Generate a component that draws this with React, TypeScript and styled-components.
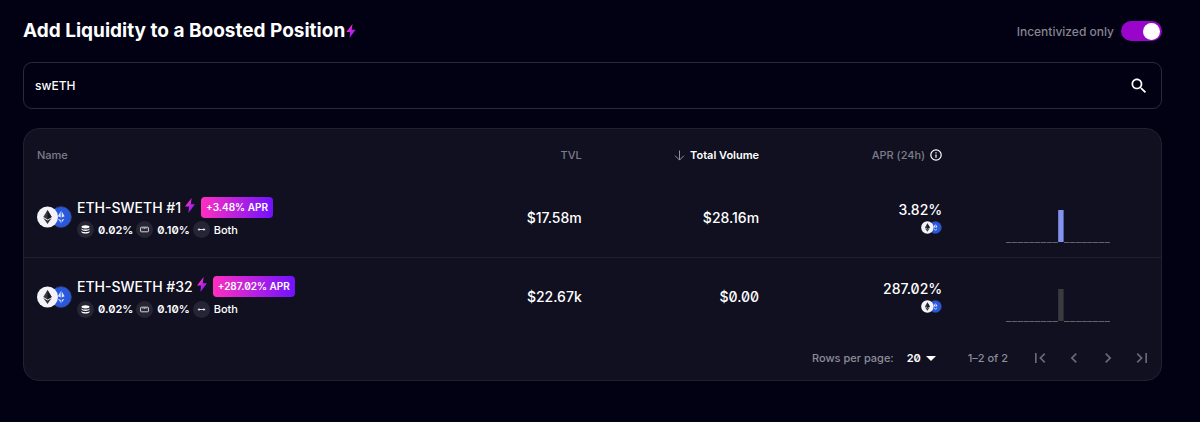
import React from 'react';
import styled, { createGlobalStyle } from 'styled-components';

const GlobalStyle = createGlobalStyle`
  *, *::before, *::after { box-sizing: border-box; }
  body {
    margin: 0;
    background: #010113;
    color: #fff;
    font-family: Inter, "Liberation Sans", sans-serif;
    font-size: 12px;
    font-weight: 500;
    font-feature-settings: "zero" 1;
  }
  button, input, select { font: inherit; color: inherit; }
`;

const Page = styled.main`
  padding: 20px 38px 40px 23px;
`;

const Header = styled.header`
  display: flex;
  align-items: center;
  justify-content: space-between;
  height: 22px;
  margin-bottom: 20px;
`;

const Title = styled.h1`
  display: flex;
  align-items: center;
  gap: 1px;
  margin: 0;
  font-size: 19px;
  font-weight: 700;
  line-height: 24px;
`;

const SwitchLabel = styled.label`
  display: flex;
  align-items: center;
  gap: 7px;
  color: #85858f;
  font-size: 12px;
`;

const Switch = styled.input`
  appearance: none;
  display: flex;
  align-items: center;
  width: 41px;
  height: 20px;
  margin: 0;
  padding: 0 2px;
  border-radius: 10px;
  background: #56566a;
  cursor: pointer;

  &::before {
    content: "";
    width: 17px;
    height: 17px;
    border-radius: 50%;
    background: #fff;
  }

  &:checked {
    justify-content: flex-end;
    background: #9a05cb;
  }
`;

const SearchBox = styled.form`
  display: flex;
  align-items: center;
  height: 47px;
  margin-bottom: 19px;
  padding: 0 12px 0 11px;
  border: 1px solid #2a2a3b;
  border-radius: 9px;
`;

const SearchInput = styled.input`
  flex: 1;
  min-width: 0;
  padding: 0;
  border: 0;
  outline: 0;
  background: transparent;
  font-size: 12px;
`;

const IconButton = styled.button`
  display: grid;
  place-items: center;
  padding: 0;
  border: 0;
  background: transparent;
  cursor: pointer;

  &:disabled { color: #6a6a75; cursor: default; }
`;

const Card = styled.section`
  border: 1px solid #212131;
  border-radius: 16px;
  background: #101021;
`;

const Table = styled.table`
  width: 100%;
  border-collapse: collapse;
  table-layout: fixed;
`;

const HeadCell = styled.th<{ $width: string; $left?: boolean; $active?: boolean }>`
  width: ${p => p.$width};
  height: 49px;
  padding: 3px 13px 0;
  text-align: ${p => (p.$left ? 'left' : 'right')};
  color: ${p => (p.$active ? '#fff' : '#7d7d88')};
  font-size: 11px;
  font-weight: ${p => (p.$active ? 600 : 500)};
`;

const HeadContent = styled.span`
  display: flex;
  align-items: center;
  justify-content: flex-end;
  gap: 5px;
`;

const Row = styled.tr`
  & + & { border-top: 1px solid #1f1f30; }
`;

const Cell = styled.td`
  height: 79px;
  padding: 0 13px;
  text-align: right;
  font-size: 14px;
`;

const ChartCell = styled(Cell)`
  padding-top: 18px;

  svg { display: block; margin: 0 auto; }
`;

const Pool = styled.div`
  display: flex;
  align-items: center;
  gap: 5px;
`;

const PoolText = styled.div`
  display: flex;
  flex-direction: column;
`;

const PoolTitle = styled.div`
  display: flex;
  align-items: center;
  gap: 4px;
  height: 22px;
  white-space: nowrap;

  svg { margin-bottom: 4px; }
`;

const AprBadge = styled.span`
  margin-left: 2px;
  padding: 0 5px;
  border-radius: 4px;
  background: linear-gradient(90deg, #ff2fc0, #7012ff);
  font-size: 10px;
  font-weight: 600;
  line-height: 21px;
`;

const Facts = styled.ul`
  display: flex;
  gap: 3px;
  margin: 3px 0 0;
  padding: 0;
  list-style: none;
`;

const Fact = styled.li<{ $strong?: boolean }>`
  display: flex;
  align-items: center;
  gap: 4px;
  font-size: 11px;
  font-weight: ${p => (p.$strong ? 600 : 500)};
`;

const FactIcon = styled.span`
  display: grid;
  place-items: center;
  width: 17px;
  height: 17px;
  border-radius: 50%;
  background: #252534;
`;

const AprValue = styled.div`
  display: flex;
  flex-direction: column;
  align-items: flex-end;
  gap: 3px;
`;

const Footer = styled.footer`
  display: flex;
  align-items: center;
  justify-content: flex-end;
  height: 44px;
  padding-right: 9px;
  color: #8d8d97;
  font-size: 11px;
`;

const PageSize = styled.label`
  display: flex;
  align-items: center;
  gap: 13px;
`;

const SelectWrap = styled.span`
  display: flex;
  align-items: center;
  gap: 4px;
  color: #fff;
`;

const Select = styled.select`
  appearance: none;
  padding: 0;
  border: 0;
  background: transparent;
  font-weight: 600;
`;

const Range = styled.span`
  margin: 0 22px 0 32px;
`;

const Pager = styled.nav`
  display: flex;
  gap: 14px;
`;

const Bolt = ({ width, height }: { width: number; height: number }) => (
  <svg width={width} height={height} viewBox="0 0 10 15" aria-hidden="true">
    <defs>
      <linearGradient id="bolt" x1="0" y1="0" x2="1" y2="1">
        <stop offset="0.2" stopColor="#ff2fd0" />
        <stop offset="0.9" stopColor="#7a14ff" />
      </linearGradient>
    </defs>
    <path d="M6.6 0 0 8.6h4.1L3.4 15 10 6.2H5.8z" fill="url(#bolt)" />
  </svg>
);

const TokenPair = ({ width, height }: { width: number; height: number }) => (
  <svg width={width} height={height} viewBox="0 0 35 22" aria-hidden="true">
    <circle cx="24" cy="11" r="10.3" fill="#2a58dc" stroke="#3a4a80" strokeWidth="0.8" />
    <path d="m24.2 4.5 3.4 5.7-3.4 1.6-3.4-1.6zM24.2 17.5l3.2-4.7-3.2 1.3-3.2-1.3z" fill="#dbe6ff" />
    <path d="M24.2 4.5v13" stroke="#2a58dc" strokeWidth="1" />
    <circle cx="10.5" cy="11" r="10.5" fill="#f4f4f8" />
    <path d="m10.5 4-4.2 7 4.2 2.5 4.2-2.5z" fill="#3b3b3f" />
    <path d="m10.5 4 4.2 7-4.2 2.5z" fill="#17171b" />
    <path d="m6.3 12 4.2 6 4.2-6-4.2 2.4z" fill="#33333a" />
  </svg>
);

const StackIcon = () => (
  <svg width="9" height="9" viewBox="0 0 9 9" fill="#fff" aria-hidden="true">
    <ellipse cx="4.5" cy="1.8" rx="4" ry="1.6" />
    <path d="M.5 3.4c1 1.6 7 1.6 8 0v1.2c-.8 1.8-7.2 1.8-8 0zM.5 6c1 1.6 7 1.6 8 0v1.2c-.8 1.8-7.2 1.8-8 0z" />
  </svg>
);

const TierIcon = () => (
  <svg width="9" height="7" viewBox="0 0 9 7" fill="none" stroke="#d5d5df" aria-hidden="true">
    <rect x="0.6" y="1.2" width="7.8" height="4.6" rx="0.6" />
    <path d="M3 1.5v1.6M4.5 1.5v1.6M6 1.5v1.6" strokeWidth="0.7" />
  </svg>
);

const BothIcon = () => (
  <svg width="9" height="5" viewBox="0 0 9 5" fill="#e5e5ee" aria-hidden="true">
    <path d="M.5 2.5 2.4.9V2h4.2V.9l1.9 1.6-1.9 1.6V3H2.4v1.1z" />
  </svg>
);

const SearchIcon = () => (
  <svg width="20" height="20" viewBox="0 0 24 24" fill="#fff" aria-hidden="true">
    <path d="M15.5 14h-.79l-.28-.27C15.41 12.59 16 11.11 16 9.5 16 5.91 13.09 3 9.5 3S3 5.91 3 9.5 5.91 16 9.5 16c1.61 0 3.09-.59 4.23-1.57l.27.28v.79l5 4.99L20.49 19zm-6 0C7.01 14 5 11.99 5 9.5S7.01 5 9.5 5 14 7.01 14 9.5 11.99 14 9.5 14" />
  </svg>
);

const ArrowDown = () => (
  <svg width="11" height="11" viewBox="0 0 11 11" fill="none" stroke="#92929c" aria-hidden="true">
    <path d="M5.5.5v9.5M1 5.6l4.5 4.5L10 5.6" />
  </svg>
);

const InfoIcon = () => (
  <svg width="12" height="12" viewBox="0 0 12 12" fill="none" stroke="#fff" aria-hidden="true">
    <circle cx="6" cy="6" r="5.2" strokeWidth="1.2" />
    <path d="M6 5.4v3.3M6 3.2v1.2" strokeWidth="1.2" />
  </svg>
);

const pagerPaths = {
  'First page': 'M18.41 16.59 13.82 12l4.59-4.59L17 6l-6 6 6 6zM6 6h2v12H6z',
  'Previous page': 'M15.41 7.41 14 6l-6 6 6 6 1.41-1.41L10.83 12z',
  'Next page': 'M8.59 16.59 13.17 12 8.59 7.41 10 6l6 6-6 6z',
  'Last page': 'M5.59 7.41 10.18 12l-4.59 4.59L7 18l6-6-6-6zM16 6h2v12h-2z',
};

const BAR_PITCH = 5.8;

const VolumeChart = ({ values, color }: { values: number[]; color: string }) => (
  <svg width="105" height="33" viewBox="0 0 105 33" role="img" aria-label="Volume history">
    {values.map((value, i) =>
      value > 0 ? (
        <rect key={i} x={i * BAR_PITCH} y={32 - value} width="5.4" height={value} fill={color} />
      ) : (
        <rect key={i} x={i * BAR_PITCH} y="32" width="5.4" height="1" fill="#62626b" />
      ),
    )}
  </svg>
);

const history = Array.from({ length: 18 }, (_, i) => (i === 9 ? 32 : 0));

const pools = [
  { name: 'ETH-SWETH #1', boost: '+3.48% APR', tvl: '$17.58m', volume: '$28.16m', apr: '3.82%', color: '#8494ee' },
  { name: 'ETH-SWETH #32', boost: '+287.02% APR', tvl: '$22.67k', volume: '$0.00', apr: '287.02%', color: '#3b3a40' },
];

export default function App() {
  return (
    <Page>
      <GlobalStyle />
      <Header>
        <Title>
          Add Liquidity to a Boosted Position
          <Bolt width={10} height={14} />
        </Title>
        <SwitchLabel>
          Incentivized only
          <Switch type="checkbox" role="switch" defaultChecked />
        </SwitchLabel>
      </Header>
      <SearchBox role="search" onSubmit={e => e.preventDefault()}>
        <SearchInput type="text" aria-label="Search positions" defaultValue="swETH" />
        <IconButton type="submit" aria-label="Search"><SearchIcon /></IconButton>
      </SearchBox>
      <Card>
        <Table>
          <thead>
            <tr>
              <HeadCell $width="35%" $left>Name</HeadCell>
              <HeadCell $width="15.2%">TVL</HeadCell>
              <HeadCell $width="15.6%" $active>
                <HeadContent><ArrowDown />Total Volume</HeadContent>
              </HeadCell>
              <HeadCell $width="16.1%">
                <HeadContent>APR (24h)<InfoIcon /></HeadContent>
              </HeadCell>
              <HeadCell $width="18.1%" aria-label="History" />
            </tr>
          </thead>
          <tbody>
            {pools.map(pool => (
              <Row key={pool.name}>
                <Cell>
                  <Pool>
                    <TokenPair width={35} height={22} />
                    <PoolText>
                      <PoolTitle>
                        {pool.name}
                        <Bolt width={10} height={15} />
                        <AprBadge>{pool.boost}</AprBadge>
                      </PoolTitle>
                      <Facts>
                        <Fact $strong><FactIcon><StackIcon /></FactIcon>0.02%</Fact>
                        <Fact $strong><FactIcon><TierIcon /></FactIcon>0.10%</Fact>
                        <Fact><FactIcon><BothIcon /></FactIcon>Both</Fact>
                      </Facts>
                    </PoolText>
                  </Pool>
                </Cell>
                <Cell>{pool.tvl}</Cell>
                <Cell>{pool.volume}</Cell>
                <Cell>
                  <AprValue>
                    {pool.apr}
                    <TokenPair width={21} height={13} />
                  </AprValue>
                </Cell>
                <ChartCell><VolumeChart values={history} color={pool.color} /></ChartCell>
              </Row>
            ))}
          </tbody>
        </Table>
        <Footer>
          <PageSize>
            Rows per page:
            <SelectWrap>
              <Select defaultValue="20">
                <option>20</option>
                <option>50</option>
              </Select>
              <svg width="10" height="5" viewBox="0 0 10 5" fill="#fff" aria-hidden="true"><path d="M0 0h10L5 5z" /></svg>
            </SelectWrap>
          </PageSize>
          <Range>1–2 of 2</Range>
          <Pager aria-label="Pagination">
            {Object.entries(pagerPaths).map(([label, d]) => (
              <IconButton key={label} type="button" aria-label={label} disabled>
                <svg width="20" height="20" viewBox="0 0 24 24" fill="currentColor" aria-hidden="true"><path d={d} /></svg>
              </IconButton>
            ))}
          </Pager>
        </Footer>
      </Card>
    </Page>
  );
}
